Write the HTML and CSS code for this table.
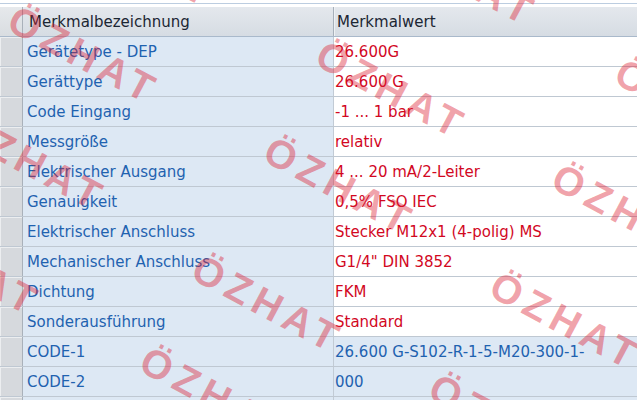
FILE: index.html
```html
<!DOCTYPE html>
<html lang="de">
<head>
<meta charset="utf-8">
<title>Merkmale</title>
<link rel="stylesheet" href="styles.css">
</head>
<body>
<div class="page">
  <div class="topstrip"><div class="topline"></div></div>
  <div class="table">
    <div class="row head">
      <div class="sel"></div>
      <div class="c1">Merkmalbezeichnung</div>
      <div class="c2">Merkmalwert</div>
    </div>
    <div class="row"><div class="sel"></div><div class="c1">Gerätetype - DEP</div><div class="c2 red">26.600G</div></div>
    <div class="row"><div class="sel"></div><div class="c1">Gerättype</div><div class="c2 red">26.600 G</div></div>
    <div class="row"><div class="sel"></div><div class="c1">Code Eingang</div><div class="c2 red">-1 ... 1 bar</div></div>
    <div class="row"><div class="sel"></div><div class="c1">Messgröße</div><div class="c2 red">relativ</div></div>
    <div class="row"><div class="sel"></div><div class="c1">Elektrischer Ausgang</div><div class="c2 red">4 ... 20 mA/2-Leiter</div></div>
    <div class="row"><div class="sel"></div><div class="c1">Genauigkeit</div><div class="c2 red">0,5% FSO IEC</div></div>
    <div class="row"><div class="sel"></div><div class="c1">Elektrischer Anschluss</div><div class="c2 red">Stecker M12x1 (4-polig) MS</div></div>
    <div class="row"><div class="sel"></div><div class="c1">Mechanischer Anschluss</div><div class="c2 red">G1/4" DIN 3852</div></div>
    <div class="row"><div class="sel"></div><div class="c1">Dichtung</div><div class="c2 red">FKM</div></div>
    <div class="row"><div class="sel"></div><div class="c1">Sonderausführung</div><div class="c2 red">Standard</div></div>
    <div class="row"><div class="sel"></div><div class="c1">CODE-1</div><div class="c2 blue">26.600 G-S102-R-1-5-M20-300-1-</div></div>
    <div class="row"><div class="sel"></div><div class="c1">CODE-2</div><div class="c2 blue">000</div></div>
    <div class="row"><div class="sel"></div><div class="c1"></div><div class="c2 blue"></div></div>
  </div>
  <div class="wm wm1">ÖZHAT</div>
  <div class="wm wm2">ÖZHAT</div>
  <div class="wm wm3">ÖZHAT</div>
  <div class="wm wm4">ÖZHAT</div>
  <div class="wm wm5">ÖZHAT</div>
  <div class="wm wm6">ÖZHAT</div>
  <div class="wm wm7">ÖZHAT</div>
  <div class="wm wm8">ÖZHAT</div>
  <div class="wm wm9">ÖZHAT</div>
  <div class="wm wm10">ÖZHAT</div>
  <div class="wm wm11">ÖZHAT</div>
  <div class="wm wm12">ÖZHAT</div>
  <div class="wm wm13">ÖZHAT</div>
</div>
</body>
</html>
```

FILE: styles.css
```css
html, body {
  margin: 0;
  padding: 0;
  background: #ffffff;
}
.page {
  position: relative;
  width: 637px;
  height: 400px;
  overflow: hidden;
  font-family: "DejaVu Sans", Tahoma, sans-serif;
  font-size: 15px;
}
.topstrip {
  height: 7px;
  padding-top: 3px;
  box-sizing: border-box;
  background: #ffffff;
}
.topline {
  height: 1px;
  background: #bccde0;
}
.table {
  display: flex;
  flex-direction: column;
}
.row {
  display: grid;
  grid-template-columns: 23px 311px 1fr;
  height: 30px;
  box-sizing: border-box;
  border-bottom: 1px solid #bfc8d2;
}
.row > div {
  display: flex;
  align-items: center;
  white-space: nowrap;
  overflow: hidden;
}
.sel {
  box-sizing: border-box;
  border-right: 1px solid #a9b1ba;
  background: #d6d9dd;
  box-shadow: inset 1px 1px 0 #eceef0;
}
.c1 {
  box-sizing: border-box;
  border-right: 1px solid #c2cbd5;
  background: #dde8f4;
  color: #1f62b0;
  padding-left: 4px;
}
.c2 {
  background: #ffffff;
  padding-left: 1px;
}
.c2.red {
  color: #d2081f;
}
.c2.blue {
  background: #dde8f4;
  color: #1f62b0;
}
.row.head {
  border-bottom: 1px solid #a9b9cb;
}
.row.head .sel {
  background: linear-gradient(#e6e9ec, #d9dde1);
  box-shadow: none;
}
.row.head .c1,
.row.head .c2 {
  background: linear-gradient(#e4e8ed, #d6dce3);
  color: #1b2633;
}
.row.head .c1 {
  padding-left: 6px;
  border-right: 1px solid #a7b0ba;
}
.row.head .c2 {
  padding-left: 3px;
  box-shadow: inset 1px 0 0 #eef1f4;
}
.wm {
  position: absolute;
  font-family: "Liberation Sans", Arial, sans-serif;
  font-weight: bold;
  font-size: 40px;
  letter-spacing: 6px;
  line-height: 1;
  color: rgba(220, 30, 50, 0.42);
  transform: translate(-50%, -50%) rotate(28deg);
  white-space: nowrap;
  pointer-events: none;
}
.wm1 { left: 84px; top: 55px; }
.wm2 { left: 392px; top: 90px; }
.wm3 { left: 691px; top: 108px; }
.wm4 { left: 340px; top: 186px; }
.wm5 { left: 628px; top: 213px; }
.wm6 { left: 31px; top: 162px; }
.wm7 { left: 268px; top: 304px; }
.wm8 { left: 216px; top: 396px; }
.wm9 { left: 505px; top: 423px; }
.wm10 { left: 566px; top: 321px; }
.wm11 { left: -34px; top: 267px; }
.wm12 { left: 462px; top: -23px; }
.wm13 { left: 142px; top: -41px; }
```
